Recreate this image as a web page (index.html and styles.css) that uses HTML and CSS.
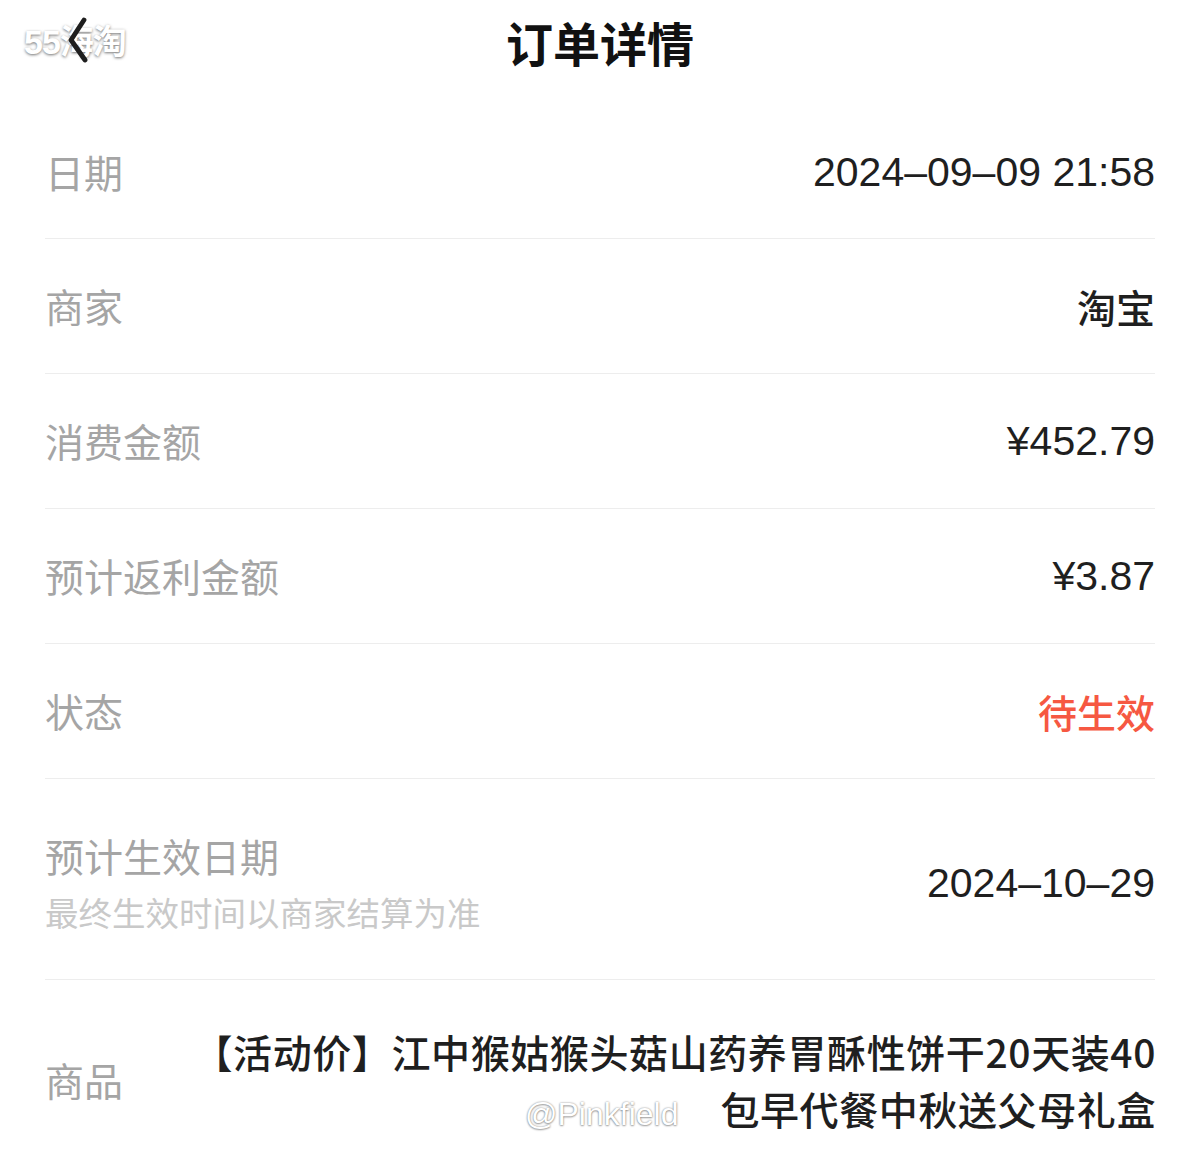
FILE: index.html
```html
<!DOCTYPE html>
<html lang="zh-CN">
<head>
    <meta charset="UTF-8">
    <meta name="viewport" content="width=device-width, initial-scale=1.0">
    <title>订单详情</title>
    <link rel="stylesheet" href="styles.css">
</head>
<body>
    <!-- Top bar -->
    <div class="nav">
        <span class="mark-top">55海淘</span>
        <div class="nav-left">
            <svg class="back" width="30" height="50" viewBox="0 0 30 50">
                <path d="M18 3 L5 23 L19 43" fill="none" stroke="#1e1e1e" stroke-width="4.8" stroke-linecap="round" stroke-linejoin="round"/>
            </svg>
        </div>
        <h1 class="title">订单详情</h1>
        <div class="nav-right"></div>
    </div>

    <div class="list">
        <div class="row">
            <span class="label">日期</span>
            <span class="value num">2024–09–09 21:58</span>
        </div>
        <div class="row">
            <span class="label">商家</span>
            <span class="value">淘宝</span>
        </div>
        <div class="row">
            <span class="label">消费金额</span>
            <span class="value num">¥452.79</span>
        </div>
        <div class="row">
            <span class="label">预计返利金额</span>
            <span class="value num">¥3.87</span>
        </div>
        <div class="row">
            <span class="label">状态</span>
            <span class="value status">待生效</span>
        </div>
        <div class="row row-tall">
            <div class="label-group">
                <span class="label">预计生效日期</span>
                <span class="sub">最终生效时间以商家结算为准</span>
            </div>
            <span class="value num">2024–10–29</span>
        </div>
        <div class="row row-goods">
            <span class="label">商品</span>
            <span class="value goods">【活动价】江中猴姑猴头菇山药养胃酥性饼干20天装40包早代餐中秋送父母礼盒</span>
            <span class="mark-bottom">@Pinkfield</span>
        </div>
    </div>
</body>
</html>
```

FILE: styles.css
```css
body {
    margin: 0;
    background-color: #fff;
    font-family: "Liberation Sans", "Noto Sans CJK SC", sans-serif;
    color: #1f1f1f;
}
.nav {
    position: relative;
    height: 106px;
    display: grid;
    grid-template-columns: 1fr auto 1fr;
    align-items: center;
}
.nav-left {
    position: relative;
    z-index: 1;
    padding-left: 66px;
    padding-bottom: 22px;
}
.back {
    display: block;
}
.title {
    margin: 0 0 24px;
    font-family: "Noto Sans CJK SC", sans-serif;
    font-size: 47px;
    font-weight: 700;
    color: #111;
}
.mark-top {
    position: absolute;
    left: 24px;
    top: 24px;
    font-family: "Liberation Sans", "Noto Sans CJK SC", sans-serif;
    font-size: 34px;
    line-height: 36px;
    font-weight: 700;
    color: #fff;
    letter-spacing: -1px;
    text-shadow: 0 1px 3px rgba(0, 0, 0, 0.55);
}
.list {
    padding: 0 45px;
}
.row {
    position: relative;
    display: flex;
    justify-content: space-between;
    align-items: center;
    height: 134px;
    border-bottom: 1px solid #ededed;
}
.row:first-child {
    height: 132px;
}
.label {
    flex-shrink: 0;
    white-space: nowrap;
    font-family: "Noto Sans CJK SC", sans-serif;
    font-size: 39px;
    color: #a5a5a5;
    line-height: 52px;
    padding-bottom: 2px;
}
.value {
    font-size: 39px;
    font-weight: 500;
    color: #1f1f1f;
    text-align: right;
}
.num {
    font-size: 41px;
}
.status {
    color: #f65842;
}
.row-tall {
    height: auto;
    padding: 50px 0 41px;
}
.label-group {
    display: flex;
    flex-direction: column;
}
.sub {
    margin-top: 3px;
    font-family: "Noto Sans CJK SC", sans-serif;
    font-size: 33.5px;
    line-height: 52px;
    color: #c9c9c9;
}
.row-goods {
    height: auto;
    padding: 43px 0 40px;
    border-bottom: none;
}
.goods {
    margin-left: 70px;
    line-height: 57px;
    letter-spacing: 0.6px;
    margin-right: -1px;
    font-family: "Noto Sans CJK SC", sans-serif;
}
.mark-bottom {
    position: absolute;
    left: 480px;
    bottom: 44px;
    font-size: 32px;
    color: #fff;
    text-shadow: 0 0 2px rgba(0, 0, 0, 0.45), 0 1px 2px rgba(0, 0, 0, 0.3);
}
```
